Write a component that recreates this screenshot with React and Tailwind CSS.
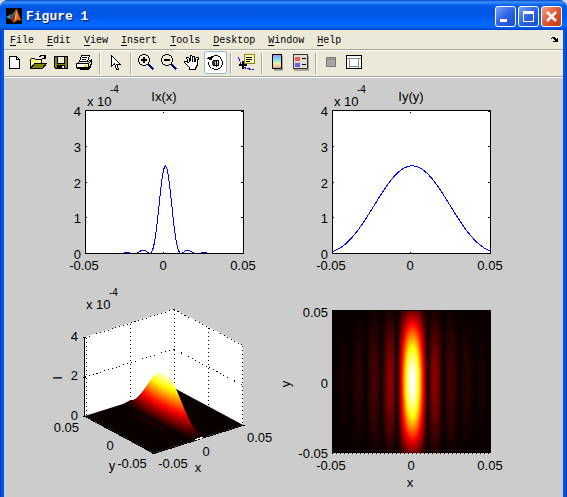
const menus = ["File", "Edit", "View", "Insert", "Tools", "Desktop", "Window", "Help"];

const sinc = (u) => (u === 0 ? 1 : Math.sin(Math.PI * u) / (Math.PI * u));
const ampX = (x) => Math.abs(sinc((x - 0.0006) / 0.0099)) * Math.exp(-((x / 0.043) ** 2));
const ampY = (y) => Math.abs(sinc((y - 0.0004) / 0.058));

// 64 step "hot" colormap
const hot = (k) => {
  const c = (v) => Math.round(255 * Math.max(0, Math.min(1, v)));
  return `rgb(${c((k + 1) / 24)}, ${c((k - 23) / 24)}, ${c((k - 47) / 16)})`;
};

const curvePath = (fn, left) => {
  const points = [];
  for (let i = 0; i <= 158; i++) {
    const v = fn(-0.05 + (0.1 * i) / 158) ** 2;
    points.push(`${left + 0.5 + i} ${(175.5 - v * 2.45 * 35.75).toFixed(2)}`);
  }
  return "M" + points.join("L");
};

const heatLevels = () => {
  const levels = [];
  for (let k = 1; k < 64; k++) {
    let d = "";
    for (let i = 0; i < 159; i++) {
      const ax = ampX(-0.05 + (0.1 * i) / 158);
      let n = 0;
      while (n < 71 && ax * ampY((0.05 * n) / 71 + 0.0004) > k / 64) n++;
      if (n > 0) d += `M${48 + i} ${96 - n}h1v${n * 2}h-1z`;
    }
    if (d) levels.push({ k, d });
  }
  return levels;
};

// slices of the surface, back to front, in a sheared frame that follows the x axis
const surfaceSlices = () => {
  const slices = [];
  for (let j = 0; j <= 160; j++) {
    const t = 1 - j / 160;
    const g = ampY(-0.05 + 0.1 * t) ** 2;
    let d = "M0 0";
    for (let i = 0; i <= 178; i++) {
      const z = ampX(-0.05 + (0.1 * i) / 178) ** 2 * g * 48.5;
      d += `L${i / 2} ${(-z).toFixed(2)}`;
    }
    slices.push({ d: d + "L89 0z", x: 150 - 69 * t, y: 167 - 37 * t });
  }
  return slices;
};

const levels = heatLevels();
const slices = surfaceSlices();
const hotStops = Array.from({ length: 17 }, (_, i) => i * 4 - (i === 16 ? 1 : 0));

const Label = ({ x, y, anchor = "middle", children, ...rest }) => (
  <text x={x} y={y} textAnchor={anchor} {...rest}>
    {children}
  </text>
);

const Exponent = ({ x, y }) => (
  <>
    <Label x={x} y={y} anchor="start">x 10</Label>
    <Label x={x + 23} y={y - 13} anchor="start" className="text-[10px]">-4</Label>
  </>
);

const Chart = ({ width, height, label, children }) => (
  <svg
    viewBox={`0 0 ${width} ${height}`}
    role="img"
    aria-label={label}
    className="block w-full overflow-visible font-['Liberation_Sans',sans-serif] text-[13px]"
  >
    {children}
  </svg>
);

const LinePlot = ({ width, left, title, fn }) => (
  <Chart width={width} height={208} label={title}>
    <rect x={left} y="32" width="158" height="143" fill="#fff" />
    <path d={curvePath(fn, left)} fill="none" stroke="#00f" shapeRendering="crispEdges" />
    <g fill="none" stroke="#000" shapeRendering="crispEdges">
      <rect x={left + 0.5} y="32.5" width="158" height="143" />
      {[68, 104, 139].map((y) => (
        <path key={y} d={`M${left} ${y + 0.5}h2M${left + 159} ${y + 0.5}h-3`} />
      ))}
      <path d={`M${left + 78.5} 34v1M${left + 78.5} 175v-1M${left + 156} 33.5h2`} />
    </g>
    <Exponent x={left + 2} y={28} />
    <Label x={left + 79} y={23}>{title}</Label>
    {[38, 74, 110, 145, 181].map((y, i) => (
      <Label key={y} x={left - 4} y={y} anchor="end">{4 - i}</Label>
    ))}
    <Label x={left - 1} y={192}>-0.05</Label>
    <Label x={left + 78} y={192}>0</Label>
    <Label x={left + 158} y={192}>0.05</Label>
  </Chart>
);

const SurfacePlot = () => (
  <Chart width={280} height={211} label="Intensity surface">
    <defs>
      <linearGradient id="height" gradientUnits="userSpaceOnUse" x1="0" y1="0" x2="0" y2="-48">
        {hotStops.map((k) => (
          <stop key={k} offset={k / 63} stopColor={hot(k)} />
        ))}
      </linearGradient>
    </defs>
    <path d="M81 51L170 23L239 59V139L170 102L81 130z" fill="#fff" />
    <g fill="none" stroke="#000" strokeDasharray="1 3" shapeRendering="crispEdges">
      <path d="M81 51.5L170 23.5" />
      <path d="M170 23.5L239 59.5" />
      <path d="M81 91L170 63" />
      <path d="M170 63L239 99.5" />
      <path d="M126.5 38V116" />
      <path d="M170.5 24V102" />
      <path d="M204.5 42V121" />
      <path d="M238.5 60V139" />
      <path d="M82.5 52V130" />
    </g>
    <path d="M81 130L150 167L239 139L170 102z" fill="#0b0000" />
    {slices.map((s, i) => (
      <path
        key={i}
        d={s.d}
        fill="url(#height)"
        transform={`matrix(1 ${-28 / 89} 0 1 ${s.x} ${s.y})`}
      />
    ))}
    <g fill="none" stroke="#000" shapeRendering="crispEdges">
      <path d="M80.5 51V130M79 51.5h3M79 91.5h3M79 130.5h3" />
      <path d="M81 130.5L150 167.5L239 139.5h2M148 167.5h4" />
    </g>
    <path d="M191 153.5h3M193 152.5h5M196 151.5h3" stroke="#fff" fill="none" shapeRendering="crispEdges" />
    <Exponent x={82} y={23} />
    <Label x={74} y={55} anchor="end">4</Label>
    <Label x={74} y={94} anchor="end">2</Label>
    <Label x={74} y={134} anchor="end">0</Label>
    <Label x={75} y={146} anchor="end">0.05</Label>
    <Label x={106} y={164}>0</Label>
    <Label x={108} y={184}>y</Label>
    <Label x={128} y={182}>-0.05</Label>
    <Label x={169} y={182}>-0.05</Label>
    <Label x={194} y={186}>x</Label>
    <Label x={202} y={170}>0</Label>
    <Label x={243} y={156} anchor="start">0.05</Label>
    <Label x={0} y={0} transform="translate(58 92) rotate(-90)">I</Label>
  </Chart>
);

const HeatPlot = () => (
  <Chart width={279} height={211} label="Intensity map">
    <rect x="48" y="24" width="159" height="143" fill="#0b0000" />
    <g shapeRendering="crispEdges">
      {levels.map(({ k, d }) => (
        <path key={k} d={d} fill={hot(k)} />
      ))}
      <path d="M48 167.5H207" stroke="#000" strokeDasharray="1 3" />
    </g>
    <Label x={44} y={31} anchor="end">0.05</Label>
    <Label x={44} y={102} anchor="end">0</Label>
    <Label x={44} y={172} anchor="end">-0.05</Label>
    <Label x={47} y={184}>-0.05</Label>
    <Label x={127} y={184}>0</Label>
    <Label x={206} y={184}>0.05</Label>
    <Label x={126} y={201}>x</Label>
    <Label x={0} y={0} transform="translate(6 98) rotate(-90)">y</Label>
  </Chart>
);

const Icon = ({ children }) => (
  <svg viewBox="0 0 17 17" className="h-[17px] w-[17px]" fill="none" stroke="#000" shapeRendering="crispEdges">
    {children}
  </svg>
);

const Lens = ({ plus }) => (
  <Icon>
    <path d="M10.5 10.5L15.5 15.5" stroke="#000080" strokeWidth="2" />
    <path
      d="M4 .5h4M2 1.5h2M8 1.5h2M1.500 2v2M10.5 2v2M.5 4v4M11.5 4v4M1.5 8v2M10.5 8v2M2 10.5h2M8 10.5h2M4 11.5h4"
    />
    <path d="M3 6h6" strokeWidth="2" />
    {plus && <path d="M6 3v6" strokeWidth="2" />}
  </Icon>
);

const icons = {
  "New Figure": (
    <Icon>
      <path d="M2.5 2.5h7l3 3v9h-10z" fill="#fff" />
      <path d="M9.5 2.5v3h3" />
    </Icon>
  ),
  "Open File": (
    <Icon>
      <path d="M.5 14.5v-9l1 -1h3l1 1h6v4" fill="#ffff80" />
      <path d="M.5 14.5l4 -5h12l-4 5z" fill="#808000" />
      <path d="M9 2.5h1l1 -1h3l1 2M15.5 1v4M12 4.5h4" />
    </Icon>
  ),
  "Save Figure": (
    <Icon>
      <path d="M1.5 2.5h13v12h-12l-1 -1z" fill="#808000" />
      <path d="M4 3h8v6h-8z" fill="#ece9d8" stroke="none" />
      <path d="M4.5 3v6h7v-6" />
      <path d="M4 11h8v4h-8z" fill="#000" stroke="none" />
      <path d="M9 12h2v2h-2z" fill="#ece9d8" stroke="none" />
    </Icon>
  ),
  "Print Figure": (
    <Icon>
      <path d="M5.5 1.5h8l-2 6h-8z" fill="#fff" />
      <path d="M6 3.5h5M6 5.5h4" />
      <path d="M3.5 7.5h9l3 -2v5l-3 4h-11v-5z" fill="#ece9d8" />
      <path d="M.5 9.5h12v4h-12zM12.5 9.5l3 -3M13 13.5l2 -3" fill="#fff" />
      <path d="M3.5 15.5h9l2 -2" />
      <path d="M8 12h3" stroke="#e6d600" strokeWidth="2" />
    </Icon>
  ),
  "Edit Plot": (
    <Icon>
      <path d="M4.5 1.5v11l3 -2.5l2 5h2l-2 -5h3.5z" fill="#fff" />
    </Icon>
  ),
  "Zoom In": <Lens plus />,
  "Zoom Out": <Lens />,
  Pan: (
    <Icon>
      <path
        d="M5.5 15.5v-2l-3 -3l-2 -2v-1.5h2l2 2l-2 -5v-1h2l1.5 4v-5l1 -1l1 1v4l1 -4h1.5v5l2 -3.5h1.5v2l-1 3v3l-2 4z"
        fill="#fff"
      />
      <path d="M5.5 4v4M8.5 4v4M11.5 5v3" />
    </Icon>
  ),
  "Rotate 3D": (
    <Icon>
      <path d="M5 2.5h2M7 1.5h4M11 2.5h2M13.5 3v2M14.5 5v2M15.5 7v4M14.5 11v2M13.5 13v1M11 14.5h2M7 15.5h4M5 14.5h2M3.5 13v1M2.5 11v2M1.5 8v3" />
      <path d="M1 3.5h5M0 4.5h5M2 5.500h3M4 2.5h1" />
      <path d="M6.5 6.5h5v5h-5z" fill="#bbb" />
      <path d="M5 7h3v4h-3z" fill="#333" stroke="none" />
      <path d="M9.5 6v7" />
    </Icon>
  ),
  "Data Cursor": (
    <Icon>
      <path d="M.5 3l1 4l2 4l4 3l8 2" stroke="#00f" strokeDasharray="4 1" />
      <path d="M6 .5h10v9h-10z" fill="#ffffb0" stroke="#8c8420" />
      <path d="M8 3.5h6M8 5.5h6M8 7.5h4" />
      <path d="M1 11h8M5 7v8" strokeWidth="2" />
    </Icon>
  ),
  "Insert Colorbar": (
    <Icon>
      <defs>
        <linearGradient id="bar" x1="0" y1="0" x2="0" y2="1">
          <stop offset="0" stopColor="#8f8ff5" />
          <stop offset="0.35" stopColor="#80dcf0" />
          <stop offset="0.65" stopColor="#f2f0a0" />
          <stop offset="1" stopColor="#f09a90" />
        </linearGradient>
      </defs>
      <path d="M5 2h9v15h-9z" fill="#a9a797" stroke="none" />
      <path d="M3.5 .5h9v14h-9z" fill="url(#bar)" />
    </Icon>
  ),
  "Insert Legend": (
    <Icon>
      <path d="M2 2h15v15h-15z" fill="#a9a797" stroke="none" />
      <path d="M1.5 .5h14v14h-14z" fill="#e0ddd0" stroke="#333" />
      <path d="M3 3h5v4h-5z" fill="#ee5f5f" stroke="none" />
      <path d="M3 9h5v4h-5z" fill="#6262ee" stroke="none" />
      <path d="M10 4.5h4M10 10.5h4" />
    </Icon>
  ),
  "Hide Plot Tools": (
    <Icon>
      <path d="M3.5 3.5h9v9h-9z" fill="#a5a5a5" stroke="#777" />
      <path d="M4 5.5h8" stroke="#888" />
    </Icon>
  ),
  "Show Plot Tools": (
    <Icon>
      <path d="M.5 1.5h15v13h-15z" fill="#fff" />
      <path d="M1 4.5h14M3.5 4v10M12.5 4v10M4 12.5h8" stroke="#888" />
    </Icon>
  ),
};

const groups = [
  ["New Figure", "Open File", "Save Figure", "Print Figure"],
  ["Edit Plot"],
  ["Zoom In", "Zoom Out", "Pan", "Rotate 3D"],
  ["Data Cursor"],
  ["Insert Colorbar", "Insert Legend"],
  ["Hide Plot Tools", "Show Plot Tools"],
];

const ToolButton = ({ name }) => (
  <button
    aria-label={name}
    className={
      name === "Rotate 3D"
        ? "flex h-[23px] w-[23px] items-center justify-center rounded-[3px] bg-white ring-1 ring-inset ring-[#98b5d0]"
        : "flex h-[23px] w-[23px] items-center justify-center"
    }
  >
    {icons[name]}
  </button>
);

const Toolbar = () => (
  <div className="flex h-[27px] border-b border-white bg-[#ece9d8] shadow-[inset_0_-1px_#aca899]">
    {groups.map((group, i) => (
      <div key={group[0]} className="flex">
        {i > 0 && <div className="mx-[3px] mt-0.5 h-[21px] w-0.5 border-l border-r border-l-[#aca899] border-r-white" />}
        {group.map((name) => (
          <ToolButton key={name} name={name} />
        ))}
      </div>
    ))}
  </div>
);

const MenuBar = () => (
  <div className="flex h-[21px] items-center justify-between border-b border-white bg-[#ece9d8] pr-1 pl-1.5 shadow-[inset_0_-1px_#aca899]">
    <nav className="flex gap-[13px] pt-0.5 font-['Liberation_Mono',monospace] text-[10px] leading-4">
      {menus.map((m) => (
        <button key={m}>
          <span className="underline underline-offset-2">{m[0]}</span>
          {m.slice(1)}
        </button>
      ))}
    </nav>
    <button aria-label="Dock Figure">
      <svg viewBox="0 0 8 6" className="h-1.5 w-2" shapeRendering="crispEdges">
        <path d="M0 1h1v-1h3v1h1v1h1v-1h1v4h-5v-1h2v-1h-1v-1h-1v-1h-1v1h-1z" fill="#000" />
      </svg>
    </button>
  </div>
);

const MatlabLogo = () => (
  <svg viewBox="0 0 16 16" className="h-4 w-4">
    <rect width="16" height="16" fill="#050505" />
    <path d="M0 9l4.5 -2.5l2 1.5l-3 3z" fill="#4b8fb0" />
    <path d="M4.5 6.5q3 -1 5.5 -5.5l-1 7l-3.5 3.5l-2 -.5z" fill="#285f78" />
    <path d="M10 1q1 0 2.5 5t3.5 7q-2.5 -1.5 -4 -1t-4.5 3q-1 -3 -3 -4q3 -1 5.5 -10z" fill="#de6418" />
    <path d="M10 1q0 6 -1.5 10l-1 4q-1 -3 -3 -4q4 -2 5.5 -10z" fill="#94240f" />
    <path d="M10 2q1 4 .5 8l-2 3q1 -6 1.5 -11z" fill="#fbbd63" />
  </svg>
);

const TitleBar = () => (
  <header className="flex h-[30px] items-center justify-between rounded-t-lg bg-[linear-gradient(180deg,#0a3fc4_0px,#3d95ff_2px,#0a62ee_5px,#0054e3_9px,#0058e8_16px,#0068ff_24px,#0066fa_27px,#003fc6_30px)] pr-[5px] pl-1.5">
    <div className="flex items-center gap-1 pt-0.5">
      <MatlabLogo />
      <h1 className="pt-0.5 font-['Liberation_Mono',monospace] text-[13px] leading-4 font-bold text-white [text-shadow:1px_1px_#0a1883]">
        Figure 1
      </h1>
    </div>
    <div className="flex gap-0.5 pt-[3px]">
      <button aria-label="Minimize" className="h-[21px] w-[21px] rounded-[3px] border border-white bg-linear-to-br from-[#7c9ff2] via-[#2c62e6] to-[#1c4ccc]">
        <svg viewBox="0 0 19 19" shapeRendering="crispEdges">
          <path d="M4 12h7v3h-7z" fill="#fff" />
        </svg>
      </button>
      <button aria-label="Maximize" className="h-[21px] w-[21px] rounded-[3px] border border-white bg-linear-to-br from-[#7c9ff2] via-[#2c62e6] to-[#1c4ccc]">
        <svg viewBox="0 0 19 19" shapeRendering="crispEdges">
          <path d="M4 4h11v11h-11zM5 7v7h9v-7z" fill="#fff" fillRule="evenodd" />
        </svg>
      </button>
      <button aria-label="Close" className="h-[21px] w-[21px] rounded-[3px] border border-white bg-linear-to-br from-[#f0a088] via-[#e05430] to-[#c23a10]">
        <svg viewBox="0 0 19 19">
          <path d="M5 5l9 9M14 5l-9 9" stroke="#fff" strokeWidth="2.5" />
        </svg>
      </button>
    </div>
  </header>
);

export default function App() {
  return (
    <div className="min-h-screen bg-[#d8d8d0] text-black">
      <div className="flex min-h-screen flex-col rounded-t-lg bg-[#0054e3]">
        <TitleBar />
        <div className="flex flex-1 flex-col border-x border-x-[#0037c0]">
          <div className="mx-[3px] flex flex-1 flex-col bg-[#ccc]">
            <MenuBar />
            <Toolbar />
            <main className="grid grid-cols-[280fr_279fr]">
              <LinePlot width={280} left={81} title="Ix(x)" fn={ampX} />
              <LinePlot width={279} left={48} title="Iy(y)" fn={ampY} />
              <SurfacePlot />
              <HeatPlot />
            </main>
          </div>
        </div>
      </div>
    </div>
  );
}
